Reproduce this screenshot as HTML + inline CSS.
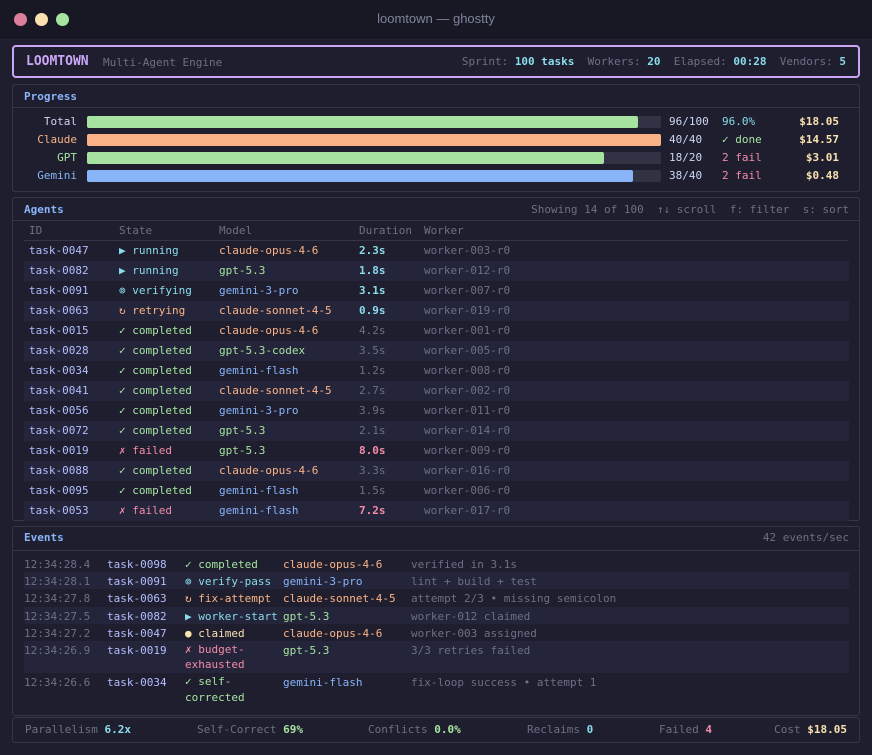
<!DOCTYPE html>
<html><head><meta charset="utf-8"><style>
*{margin:0;padding:0;box-sizing:border-box}
body{width:872px;height:755px;background:#1e1e2e;font-family:"DejaVu Sans Mono","Liberation Mono",monospace;font-size:11px;color:#cdd6f4;position:relative;overflow:hidden}
.tb{position:absolute;left:0;top:0;width:872px;height:38px;background:#181825;border-bottom:1px solid #11111b}
.dot{position:absolute;top:13px;width:13px;height:13px;border-radius:50%}
.ttl{position:absolute;left:0;right:0;top:11px;text-align:center;font-family:"Liberation Sans",sans-serif;font-size:13px;color:#7f849c}
.abs{position:absolute;white-space:pre}
.panel{position:absolute;left:12px;width:848px;border:1px solid #363649;border-radius:3px}
.ptitle{position:absolute;left:11px;font-weight:bold;color:#89b4fa}
.sep{position:absolute;left:0;right:0;height:1px;background:#363649}
.dim{color:#6c7086}.lav{color:#b4befe}.blue{color:#89b4fa}.sky{color:#89dceb}.grn{color:#a6e3a1}.pch{color:#fab387}.red{color:#f38ba8}.yel{color:#f9e2af}.mau{color:#cba6f7}.b{font-weight:bold}
.row{position:absolute;left:11px;width:825px;height:20px}
.stripe{background:#24243a}
.row span,.erow span{position:absolute;top:3px;white-space:pre}
.erow{position:absolute;left:11px;width:825px;height:17px}
.erow span{top:1px;line-height:17px}
.bar{position:absolute;left:74px;width:574px;height:12px;background:#313244;border-radius:2px}
.bar i{position:absolute;left:0;top:0;height:12px;border-radius:2px}
</style></head><body>
<div class="tb">
<div class="dot" style="left:14px;background:#f38ba8;opacity:.9"></div>
<div class="dot" style="left:35px;background:#f9e2af"></div>
<div class="dot" style="left:56px;background:#a6e3a1"></div>
<div class="ttl">loomtown — ghostty</div>
</div>

<div style="position:absolute;left:12px;top:45px;width:848px;height:33px;border:2px solid #cba6f7;border-radius:4px">
<span class="abs mau b" style="left:12px;top:7px;font-size:13px">LOOMTOWN</span>
<span class="abs dim" style="left:89px;top:9px">Multi-Agent Engine</span>
<span class="abs" style="right:12px;top:8px"><span class="dim">Sprint: </span><span class="sky b">100 tasks</span><span class="dim">  Workers: </span><span class="sky b">20</span><span class="dim">  Elapsed: </span><span class="sky b">00:28</span><span class="dim">  Vendors: </span><span class="sky b">5</span></span>
</div>

<div class="panel" style="top:84px;height:108px">
<span class="ptitle" style="top:5px">Progress</span>
<div class="sep" style="top:22px"></div>
<span class="abs" style="right:782px;top:30px">Total</span>
<span class="abs pch" style="right:782px;top:48px">Claude</span>
<span class="abs grn" style="right:782px;top:66px">GPT</span>
<span class="abs blue" style="right:782px;top:84px">Gemini</span>
<div class="bar" style="top:31px"><i style="width:551px;background:#a6e3a1"></i></div>
<div class="bar" style="top:49px"><i style="width:574px;background:#fab387"></i></div>
<div class="bar" style="top:67px"><i style="width:517px;background:#a6e3a1"></i></div>
<div class="bar" style="top:85px"><i style="width:546px;background:#89b4fa"></i></div>
<span class="abs" style="left:656px;top:30px">96/100</span>
<span class="abs" style="left:656px;top:48px">40/40</span>
<span class="abs" style="left:656px;top:66px">18/20</span>
<span class="abs" style="left:656px;top:84px">38/40</span>
<span class="abs sky" style="left:709px;top:30px">96.0%</span>
<span class="abs grn" style="left:709px;top:48px">✓ done</span>
<span class="abs red" style="left:709px;top:66px">2 fail</span>
<span class="abs red" style="left:709px;top:84px">2 fail</span>
<span class="abs yel b" style="right:20px;top:30px">$18.05</span>
<span class="abs yel b" style="right:20px;top:48px">$14.57</span>
<span class="abs yel b" style="right:20px;top:66px">$3.01</span>
<span class="abs yel b" style="right:20px;top:84px">$0.48</span>
</div>

<div class="panel" style="top:197px;height:324px">
<span class="ptitle" style="top:5px">Agents</span>
<span class="abs dim" style="right:10px;top:5px">Showing 14 of 100  ↑↓ scroll  f: filter  s: sort</span>
<div class="sep" style="top:22px"></div>
<span class="abs dim" style="left:16px;top:26px">ID</span>
<span class="abs dim" style="left:106px;top:26px">State</span>
<span class="abs dim" style="left:206px;top:26px">Model</span>
<span class="abs dim" style="left:346px;top:26px">Duration</span>
<span class="abs dim" style="left:411px;top:26px">Worker</span>
<div class="sep" style="top:42px;left:11px;right:11px"></div>
<div class="row" style="top:43px"><span class="lav" style="left:5px">task-0047</span><span class="sky" style="left:95px">▶ running</span><span class="pch" style="left:195px">claude-opus-4-6</span><span class="sky b" style="left:335px">2.3s</span><span class="dim" style="left:400px">worker-003-r0</span></div>
<div class="row stripe" style="top:63px"><span class="lav" style="left:5px">task-0082</span><span class="sky" style="left:95px">▶ running</span><span class="grn" style="left:195px">gpt-5.3</span><span class="sky b" style="left:335px">1.8s</span><span class="dim" style="left:400px">worker-012-r0</span></div>
<div class="row" style="top:83px"><span class="lav" style="left:5px">task-0091</span><span class="sky" style="left:95px">⊚ verifying</span><span class="blue" style="left:195px">gemini-3-pro</span><span class="sky b" style="left:335px">3.1s</span><span class="dim" style="left:400px">worker-007-r0</span></div>
<div class="row stripe" style="top:103px"><span class="lav" style="left:5px">task-0063</span><span class="pch" style="left:95px">↻ retrying</span><span class="pch" style="left:195px">claude-sonnet-4-5</span><span class="sky b" style="left:335px">0.9s</span><span class="dim" style="left:400px">worker-019-r0</span></div>
<div class="row" style="top:123px"><span class="lav" style="left:5px">task-0015</span><span class="grn" style="left:95px">✓ completed</span><span class="pch" style="left:195px">claude-opus-4-6</span><span class="dim" style="left:335px">4.2s</span><span class="dim" style="left:400px">worker-001-r0</span></div>
<div class="row stripe" style="top:143px"><span class="lav" style="left:5px">task-0028</span><span class="grn" style="left:95px">✓ completed</span><span class="grn" style="left:195px">gpt-5.3-codex</span><span class="dim" style="left:335px">3.5s</span><span class="dim" style="left:400px">worker-005-r0</span></div>
<div class="row" style="top:163px"><span class="lav" style="left:5px">task-0034</span><span class="grn" style="left:95px">✓ completed</span><span class="blue" style="left:195px">gemini-flash</span><span class="dim" style="left:335px">1.2s</span><span class="dim" style="left:400px">worker-008-r0</span></div>
<div class="row stripe" style="top:183px"><span class="lav" style="left:5px">task-0041</span><span class="grn" style="left:95px">✓ completed</span><span class="pch" style="left:195px">claude-sonnet-4-5</span><span class="dim" style="left:335px">2.7s</span><span class="dim" style="left:400px">worker-002-r0</span></div>
<div class="row" style="top:203px"><span class="lav" style="left:5px">task-0056</span><span class="grn" style="left:95px">✓ completed</span><span class="blue" style="left:195px">gemini-3-pro</span><span class="dim" style="left:335px">3.9s</span><span class="dim" style="left:400px">worker-011-r0</span></div>
<div class="row stripe" style="top:223px"><span class="lav" style="left:5px">task-0072</span><span class="grn" style="left:95px">✓ completed</span><span class="grn" style="left:195px">gpt-5.3</span><span class="dim" style="left:335px">2.1s</span><span class="dim" style="left:400px">worker-014-r0</span></div>
<div class="row" style="top:243px"><span class="lav" style="left:5px">task-0019</span><span class="red" style="left:95px">✗ failed</span><span class="grn" style="left:195px">gpt-5.3</span><span class="red b" style="left:335px">8.0s</span><span class="dim" style="left:400px">worker-009-r0</span></div>
<div class="row stripe" style="top:263px"><span class="lav" style="left:5px">task-0088</span><span class="grn" style="left:95px">✓ completed</span><span class="pch" style="left:195px">claude-opus-4-6</span><span class="dim" style="left:335px">3.3s</span><span class="dim" style="left:400px">worker-016-r0</span></div>
<div class="row" style="top:283px"><span class="lav" style="left:5px">task-0095</span><span class="grn" style="left:95px">✓ completed</span><span class="blue" style="left:195px">gemini-flash</span><span class="dim" style="left:335px">1.5s</span><span class="dim" style="left:400px">worker-006-r0</span></div>
<div class="row stripe" style="top:303px"><span class="lav" style="left:5px">task-0053</span><span class="red" style="left:95px">✗ failed</span><span class="blue" style="left:195px">gemini-flash</span><span class="red b" style="left:335px">7.2s</span><span class="dim" style="left:400px">worker-017-r0</span></div>
</div>

<div class="panel" style="top:526px;height:190px">
<span class="ptitle" style="top:4px">Events</span>
<span class="abs dim" style="right:10px;top:4px">42 events/sec</span>
<div class="sep" style="top:23px"></div>
<div class="erow" style="top:28px"><span class="dim" style="left:0">12:34:28.4</span><span class="lav" style="left:83px">task-0098</span><span class="grn" style="left:161px">✓ completed</span><span class="pch" style="left:259px">claude-opus-4-6</span><span class="dim" style="left:387px">verified in 3.1s</span></div>
<div class="erow stripe" style="top:45px"><span class="dim" style="left:0">12:34:28.1</span><span class="lav" style="left:83px">task-0091</span><span class="sky" style="left:161px">⊚ verify-pass</span><span class="blue" style="left:259px">gemini-3-pro</span><span class="dim" style="left:387px">lint + build + test</span></div>
<div class="erow" style="top:62px"><span class="dim" style="left:0">12:34:27.8</span><span class="lav" style="left:83px">task-0063</span><span class="pch" style="left:161px">↻ fix-attempt</span><span class="pch" style="left:259px">claude-sonnet-4-5</span><span class="dim" style="left:387px">attempt 2/3 • missing semicolon</span></div>
<div class="erow stripe" style="top:80px"><span class="dim" style="left:0">12:34:27.5</span><span class="lav" style="left:83px">task-0082</span><span class="sky" style="left:161px">▶ worker-start</span><span class="grn" style="left:259px">gpt-5.3</span><span class="dim" style="left:387px">worker-012 claimed</span></div>
<div class="erow" style="top:97px"><span class="dim" style="left:0">12:34:27.2</span><span class="lav" style="left:83px">task-0047</span><span class="yel" style="left:161px">● claimed</span><span class="pch" style="left:259px">claude-opus-4-6</span><span class="dim" style="left:387px">worker-003 assigned</span></div>
<div class="erow stripe" style="top:114px;height:32px"><span class="dim" style="left:0">12:34:26.9</span><span class="lav" style="left:83px">task-0019</span><span class="red" style="left:161px;line-height:15px">✗ budget-
exhausted</span><span class="grn" style="left:259px">gpt-5.3</span><span class="dim" style="left:387px">3/3 retries failed</span></div>
<div class="erow" style="top:146px;height:32px"><span class="dim" style="left:0">12:34:26.6</span><span class="lav" style="left:83px">task-0034</span><span class="grn" style="left:161px;line-height:16px">✓ self-
corrected</span><span class="blue" style="left:259px">gemini-flash</span><span class="dim" style="left:387px">fix-loop success • attempt 1</span></div>
</div>

<div class="panel" style="top:717px;height:26px">
<span class="abs" style="left:12px;top:5px"><span class="dim">Parallelism </span><span class="sky b">6.2x</span></span>
<span class="abs" style="left:184px;top:5px"><span class="dim">Self-Correct </span><span class="grn b">69%</span></span>
<span class="abs" style="left:355px;top:5px"><span class="dim">Conflicts </span><span class="grn b">0.0%</span></span>
<span class="abs" style="left:514px;top:5px"><span class="dim">Reclaims </span><span class="sky b">0</span></span>
<span class="abs" style="left:646px;top:5px"><span class="dim">Failed </span><span class="red b">4</span></span>
<span class="abs" style="right:12px;top:5px"><span class="dim">Cost </span><span class="yel b">$18.05</span></span>
</div>
</body></html>
